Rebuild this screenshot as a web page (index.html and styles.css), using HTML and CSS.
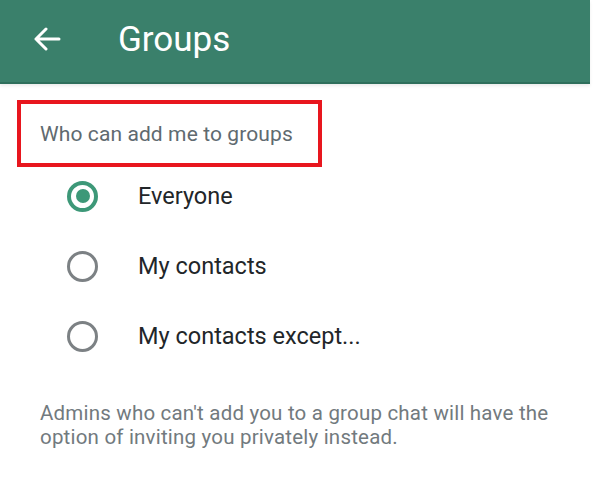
FILE: index.html
```html
<!DOCTYPE html>
<html lang="en">
<head>
  <meta charset="UTF-8" />
  <title>Groups</title>
  <link rel="stylesheet" href="styles.css">
</head>
<body>

  <header class="topbar">
    <svg class="back" width="28" height="24" viewBox="0 0 28 24">
      <path d="M26 12 H3 M13 2 L3 12 L13 22" fill="none" stroke="#fff" stroke-width="3" stroke-linecap="round" stroke-linejoin="round"/>
    </svg>
    <h1>Groups</h1>
  </header>

  <div class="label-box">Who can add me to groups</div>

  <ul class="options">
    <li><span class="radio checked"></span>Everyone</li>
    <li><span class="radio"></span>My contacts</li>
    <li><span class="radio"></span>My contacts except...</li>
  </ul>

  <p class="note">Admins who can't add you to a group chat will have the option of inviting you privately instead.</p>

</body>
</html>
```

FILE: styles.css
```css
body {
  margin: 0;
  background: #fff;
  font-family: Roboto, "Noto Sans", sans-serif;
}

.topbar {
  width: 590px;
  height: 84px;
  background: #3a806b;
  border-bottom: 2px solid #2f6f5c;
  box-sizing: border-box;
  display: flex;
  align-items: center;
  padding-left: 33px;
  box-shadow: 0 2px 3px rgba(0,0,0,0.08);
}

.back { margin-top: -4px; }

.topbar h1 {
  margin: 0 0 4px 57px;
  color: #fff;
  font-size: 35px;
  font-weight: 400;
}

.label-box {
  margin: 16px 0 0 17px;
  width: 305px;
  height: 67px;
  box-sizing: border-box;
  border: 4px solid #e8161e;
  padding-left: 19px;
  display: flex;
  align-items: center;
  color: #606a70;
  font-size: 21px;
  letter-spacing: 0.1px;
}

.options {
  list-style: none;
  margin: 0;
  padding: 0 0 0 67px;
}

.options li {
  height: 70px;
  display: flex;
  align-items: center;
  font-size: 23.5px;
  color: #222629;
}

.options li:first-child { margin-top: -6px; }

.radio {
  width: 31px;
  height: 31px;
  box-sizing: border-box;
  border: 3px solid #7c8184;
  border-radius: 50%;
  margin-right: 40px;
  display: flex;
  align-items: center;
  justify-content: center;
}

.radio.checked {
  border: 4px solid #3d9878;
}

.radio.checked::after {
  content: "";
  width: 14px;
  height: 14px;
  border-radius: 50%;
  background: #3d9878;
}

.note {
  margin: 30px 40px 0 40px;
  color: #727a7e;
  font-size: 20.5px;
  letter-spacing: 0.2px;
  line-height: 24px;
  width: 520px;
}
```
